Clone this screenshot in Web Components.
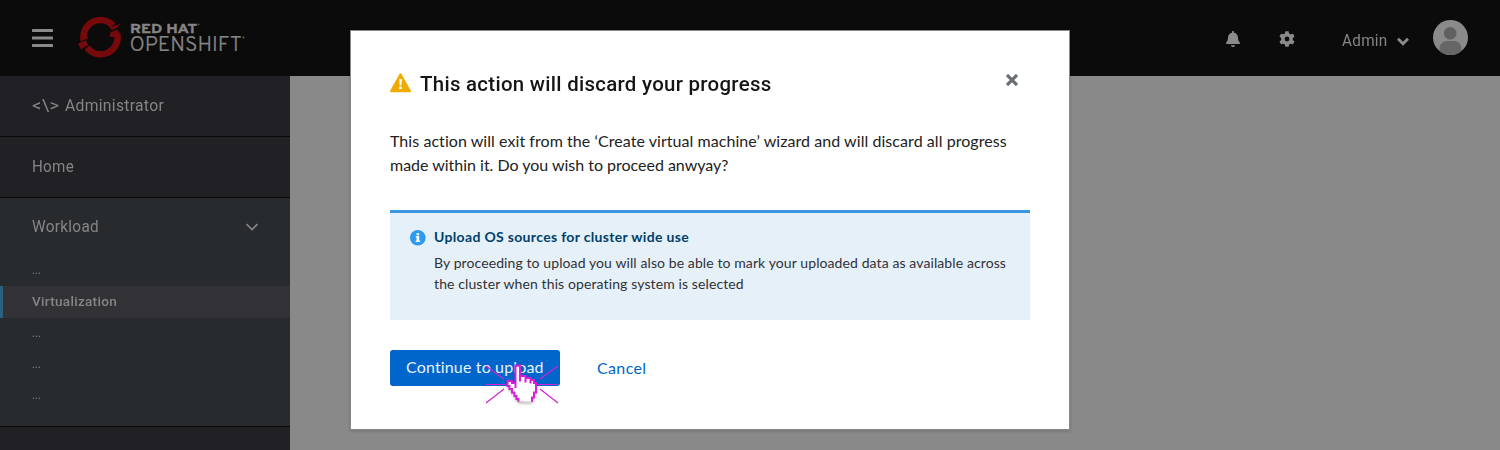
<!DOCTYPE html>
<html lang="en"><head><meta charset="utf-8"><title>OpenShift</title>
<style>html,body{margin:0;height:450px;overflow:hidden;background:#898989}body{font-family:Lato,"Liberation Sans",sans-serif}</style></head>
<body><os-app></os-app>
<script>
const define=(name,html,init)=>{const t=document.createElement('template');t.innerHTML=html;
customElements.define(name,class extends HTMLElement{constructor(){super();this.attachShadow({mode:'open'}).append(t.content.cloneNode(true))}connectedCallback(){if(init)init(this)}})};
/* A single line of text set to a given measure: w = width, s = size, k = scale the glyphs instead of the tracking */
define('text-line','<style>:host{display:block;white-space:nowrap;flex:none}span{display:inline-block;transform-origin:0 50%}</style><span><slot></slot></span>',e=>{
 e.style.fontSize=e.getAttribute('s')+'px';e.style.lineHeight=(e.getAttribute('lh')||24)+'px';
 const w=+e.getAttribute('w'),sp=e.shadowRoot.querySelector('span');e.style.width=w+'px';
 requestAnimationFrame(()=>{sp.style.transform='';sp.style.letterSpacing=e.hasAttribute('k')?'.3px':'';const n=sp.getBoundingClientRect().width;if(!n)return;
 if(e.hasAttribute('k'))sp.style.transform='scaleX('+w/n+')';else sp.style.letterSpacing=(w-n)/e.textContent.length+'px'});
});
define('os-logo',`<style>:host{display:flex}svg{display:block}</style>
<svg width="170" height="44" viewBox="78 15 170 44"><g fill="none" stroke="#75090b" stroke-width="6.500"><path d="M83.500 38A17 17 0 0 1 113 25.500"/><path d="M117.300 34A17 17 0 0 1 87 47.500"/></g>
<path fill="#75090b" d="M109.500 27.500L121 23.600 115.500 28.500 112 30zM110.500 32.500L117 29.500 120.500 34 117 38 109.500 36.500zM78 43.500L85.500 40.300 88.500 45 81 49.500zM80 38.500L86 35 88.500 38 80.500 41.500z"/>
<g fill="#858585" font-family="Overpass,Roboto,sans-serif"><text x="130" y="32.700" font-size="13.500" font-weight="700" stroke="#858585" stroke-width=".4" textLength="67" lengthAdjust="spacingAndGlyphs">RED HAT</text><text x="129.500" y="51" font-size="20.500" font-weight="300" stroke="#858585" stroke-width=".2" textLength="112.500" lengthAdjust="spacingAndGlyphs">OPENSHIFT</text></g><circle cx="198.500" cy="24.500" r=".9" fill="#555"/><circle cx="243.500" cy="37.500" r=".9" fill="#666"/></svg>`);
define('os-header',`<style>:host{display:flex;box-sizing:border-box;height:76px;background:#0b0b0b;color:#858585;padding:0 32px;align-items:flex-start;font-family:Roboto,sans-serif}
svg{display:block;flex:none}.menu{margin-top:29px}os-logo{margin:15px 0 0 25px}.bell{margin:31px 0 0 977.500px}.gear{margin:31px 0 0 39.500px}text-line{margin:28px 0 0 47px}.chev{margin:37px 0 0 9px}.av{margin:20px 0 0 24px}</style>
<svg class="menu" width="21" height="18" fill="#8a8a8a"><rect width="21" height="3" rx=".6"/><rect y="7.500" width="21" height="3" rx=".6"/><rect y="15" width="21" height="3" rx=".6"/></svg><os-logo></os-logo>
<svg class="bell" width="14" height="16" viewBox="0 0 448 512" fill="#8b8b8b"><path d="M224 512c35 0 64-20 64-56H160c0 36 29 56 64 56zm215-150c-19-21-55-52-55-154 0-78-54-140-128-155V32c0-18-14-32-32-32s-32 14-32 32v21C118 68 64 130 64 208c0 102-36 133-55 154-6 6-9 14-9 22 0 16 13 32 32 32h384c19 0 32-16 32-32 0-8-3-16-9-22z"/></svg>
<svg class="gear" width="16" height="16" viewBox="-8 -8 16 16"><g fill="#8b8b8b"><circle r="5.900"/><rect x="-1.900" y="-7.800" width="3.800" height="15.600" rx=".7"/><rect x="-1.900" y="-7.800" width="3.800" height="15.600" rx=".7" transform="rotate(60)"/><rect x="-1.900" y="-7.800" width="3.800" height="15.600" rx=".7" transform="rotate(120)"/></g><circle r="2.400" fill="#0b0b0b"/></svg>
<text-line s="17" w="45.500" k>Admin</text-line>
<svg class="chev" width="12" height="10" fill="none" stroke="#8b8b8b" stroke-width="3"><path d="M1 1.700l5 5 5-5"/></svg>
<svg class="av" width="35" height="35" viewBox="0 0 35 35"><clipPath id="c"><circle cx="17.500" cy="17.500" r="17.500"/></clipPath><g clip-path="url(#c)"><path fill="#8a8a8a" d="M0 0h35v35H0z"/><circle cx="17.200" cy="13.300" r="6.300" fill="#606060"/><path fill="#666" d="M6.500 35v-6c0-5 3-8 8-8h6c5 0 8 3 8 8v6z"/></g></svg>`);
define('nav-item',`<style>:host{display:flex;box-sizing:border-box;height:31px;padding:0 0 1px 32px;align-items:center;color:#858585}:host([active]){background:#323236;box-shadow:inset 3px 0 #2b617d;height:32px;padding-bottom:2px}</style><slot></slot>`);
define('nav-section',`<style>:host{display:flex;flex-direction:column;box-sizing:border-box;border-bottom:1px solid #090909;background:#212125}:host([open]){background:#272b2e}.h{display:flex;align-items:center;justify-content:flex-start;padding:0 32px;height:60px}:host([open]) .h{height:57px}</style><div class="h"><slot name="head"></slot></div><slot></slot>`);
define('os-nav',`<style>:host{display:block;width:290px;height:374px;background:#212125;color:#858585;font-family:Roboto,sans-serif}nav-section[open]{height:229px}svg{display:block}div{display:flex;justify-content:space-between;align-items:center;width:226px}.a{margin-top:-1px}.g{margin-right:5px}</style>
<nav-section><text-line class="a g" slot="head" s="16.500" w="27.500" k>&lt;\\&gt;</text-line><text-line class="a" slot="head" s="16.500" w="99" k>Administrator</text-line></nav-section>
<nav-section><text-line class="a" slot="head" s="16.500" w="42" k>Home</text-line></nav-section>
<nav-section open><div slot="head"><text-line s="16.500" w="67" k>Workload</text-line><svg width="13" height="9" fill="none" stroke="#858585" stroke-width="1.700"><path d="M1.500 2l5.500 5.500 5.500-5.500"/></svg></div>
<nav-item><text-line s="13" w="9" k>...</text-line></nav-item><nav-item active><text-line s="13.500" w="85" k style="font-weight:500">Virtualization</text-line></nav-item><nav-item><text-line s="13" w="9" k>...</text-line></nav-item><nav-item><text-line s="13" w="9" k>...</text-line></nav-item><nav-item><text-line s="13" w="9" k>...</text-line></nav-item></nav-section>`);
define('info-alert',`<style>:host{display:flex;box-sizing:border-box;height:110px;border-top:3px solid #3b96e2;background:#e6f0f9;padding:13px 20px;gap:8px;color:#303236}svg{flex:none;margin-top:4px}</style><svg width="16" height="16" viewBox="0 0 16 16"><circle cx="7.800" cy="7.800" r="7.800" fill="#2b9af3"/><path fill="#fff" d="M6.500 3.200h2.700v2H6.500zM5.800 6.100h3.400v4.300h.9v1.500H5.700v-1.500h.9V7.600h-.8z"/></svg><div><slot></slot></div>`);
define('click-hand',`<style>:host{display:block;position:absolute;left:134px;top:333px}svg{display:block;overflow:visible}.h{filter:drop-shadow(0 1px 1px #0004)}</style>
<svg width="74" height="40" viewBox="485 364 74 40"><g stroke="#d322d3" stroke-width="1.200" fill="none"><path d="M486 366l18 13M486 384.500h22M486 403l18-14M558 366l-18 13M536 384.500h22M558 403l-18-14"/></g>
<g class="h"><path fill="#fff" d="M518.500 402v-3h-2v-3h-2v-3.500h-2.500v-3.500h-2.500v-3h-2v-5h4.500v2h3.500v-16.500h4.500v10.500h5.500v2h5v2h3.500v3h1.500v9.500h-2v5h-2v4.500z"/><path fill="none" stroke="#d91edb" stroke-width="2" d="M518.500 402v-3h-2v-3h-2v-3.500h-2.500v-3.500h-2.500v-3h-2v-5h4.500v2h3.500v5M515.500 388v-22.500h4.500v16M520 376h5.500v6.500M525.500 378h5v5.500M530.500 380h3.500v3h2v9.500h-2v5h-2v4.500"/><path d="M518.500 402h13.500" stroke="#bbb"/></g></svg>`);
define('confirm-modal',`<style>:host{display:flex;flex-direction:column;box-sizing:border-box;position:absolute;left:350px;top:30px;width:720px;height:400px;padding:38px 39px 39px;background:#fff;border:1px solid #898989;box-shadow:0 1px 3px #0003;color:#222}
.t{display:flex;height:60px;align-items:flex-start;font-family:Roboto,sans-serif;font-weight:500;color:#151515}.t text-line{margin:2px 0 0 9px}.warn{margin-top:4px}.x{margin:5px 12px 0 auto}.body{height:81px}info-alert{flex:none}.b{display:flex;margin-top:30px;gap:37px;color:#06c}.btn{display:flex;width:170px;height:36px;box-sizing:border-box;padding:5px 16px;background:#06c;color:#e9f2fc;border-radius:3px}.cancel{margin-top:6px}.strong{color:#00406a;font-weight:700}</style>
<div class="t"><svg class="warn" width="21" height="20" viewBox="0 0 21 20"><path fill="#f0ab00" stroke="#f0ab00" stroke-width="2" stroke-linejoin="round" d="M10.500 1.200L20 18.200H1z"/><path fill="#fff" d="M9.200 6h2.700l-.4 6.300H9.600zM9.300 13.500h2.500V16H9.300z"/></svg><text-line s="21" lh="26" w="351.500" k>This action will discard your progress</text-line><svg class="x" width="12" height="12" stroke="#6a6e73" stroke-width="3.200"><path d="M1 1l10 10M11 1L1 11"/></svg></div>
<div class="body"><text-line s="16" w="617">This action will exit from the ‘Create virtual machine’ wizard and will discard all progress</text-line><text-line s="16" w="338.500">made within it. Do you wish to proceed anwyay?</text-line></div>
<info-alert><text-line class="strong" s="14" w="255" lh="21">Upload OS sources for cluster wide use</text-line><text-line style="margin-top:5px" s="14" lh="21" w="572">By proceeding to upload you will also be able to mark your uploaded data as available across</text-line><text-line s="14" lh="21" w="310">the cluster when this operating system is selected</text-line></info-alert>
<div class="b"><div class="btn"><text-line s="16" w="138">Continue to upload</text-line></div><text-line class="cancel" s="16" w="49.500">Cancel</text-line></div><click-hand></click-hand>`);
define('os-app','<style>:host{display:block;position:relative;width:1500px;height:450px;background:#898989}</style><os-header></os-header><os-nav></os-nav><confirm-modal></confirm-modal>');
</script></body></html>
